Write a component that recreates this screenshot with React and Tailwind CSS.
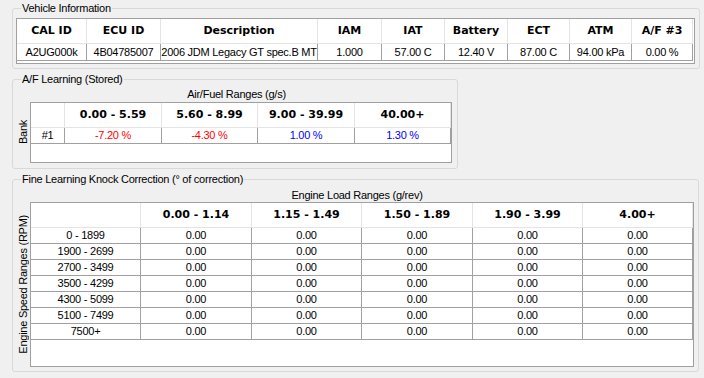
import React from "react";

const vehicleInfo = [
  { label: "CAL ID", value: "A2UG000k", w: "w-[70px]" },
  { label: "ECU ID", value: "4B04785007", w: "w-[74px]" },
  { label: "Description", value: "2006 JDM Legacy GT spec.B MT", w: "w-[157px]" },
  { label: "IAM", value: "1.000", w: "w-[64px]" },
  { label: "IAT", value: "57.00 C", w: "w-[63px]" },
  { label: "Battery", value: "12.40 V", w: "w-[63px]" },
  { label: "ECT", value: "87.00 C", w: "w-[62px]" },
  { label: "ATM", value: "94.00 kPa", w: "w-[62px]" },
  { label: "A/F #3", value: "0.00 %", w: "w-[61px]" },
];

const afRanges = [
  { label: "0.00 - 5.59", value: "-7.20 %", color: "text-[#ff0000]", w: "w-[97px]" },
  { label: "5.60 - 8.99", value: "-4.30 %", color: "text-[#ff0000]", w: "w-[96px]" },
  { label: "9.00 - 39.99", value: "1.00 %", color: "text-[#0000ff]", w: "w-[97px]" },
  { label: "40.00+", value: "1.30 %", color: "text-[#0000ff]", w: "w-[96px]" },
];

const loadRanges = [
  { label: "0.00 - 1.14", w: "w-[111px]" },
  { label: "1.15 - 1.49", w: "w-[110px]" },
  { label: "1.50 - 1.89", w: "w-[111px]" },
  { label: "1.90 - 3.99", w: "w-[110px]" },
  { label: "4.00+", w: "w-[110px]" },
];

const rpmRanges = [
  "0 - 1899",
  "1900 - 2699",
  "2700 - 3499",
  "3500 - 4299",
  "4300 - 5099",
  "5100 - 7499",
  "7500+",
];

const headCell =
  "flex items-center justify-center whitespace-nowrap bg-white border-r border-b border-[#e4e4e4] font-['DejaVu_Sans',Verdana,sans-serif] font-bold text-[11px] tracking-normal";
const dataCell =
  "flex items-center justify-center whitespace-nowrap overflow-hidden bg-white border-r border-b border-[#a0a0a0]";

const GroupLegend = ({ children }) => (
  <legend className="ml-[5px] px-[1px] leading-[13px]">{children}</legend>
);

const SideLabel = ({ children }) => (
  <div className="w-[14px] flex items-center justify-center">
    <span className="[writing-mode:vertical-rl] rotate-180 leading-[13px] whitespace-nowrap">
      {children}
    </span>
  </div>
);

export default function App() {
  return (
    <div className="w-[704px] h-[378px] bg-[#f0f0f0] pt-[2px] text-[11px] tracking-[-0.25px] text-black font-['Liberation_Sans',Arial,sans-serif] overflow-hidden">
      {/* Vehicle Information */}
      <fieldset className="ml-[12px] w-[688px] h-[67px] border border-[#d9d9d9] rounded-[3px] px-[3px]">
        <GroupLegend>Vehicle Information</GroupLegend>
        <div className="mt-[3px] w-[679px] h-[46px] border border-[#a0a0a0] bg-white">
          <div className="flex h-[25px]">
            {vehicleInfo.map((c) => (
              <div key={c.label} className={`${headCell} ${c.w}`}>
                {c.label}
              </div>
            ))}
          </div>
          <div className="flex h-[17px]">
            {vehicleInfo.map((c) => (
              <div key={c.label} className={`${dataCell} ${c.w}`}>
                {c.value}
              </div>
            ))}
          </div>
        </div>
      </fieldset>

      {/* A/F Learning */}
      <fieldset className="mt-[4px] ml-[12px] w-[446px] h-[96px] border border-[#d9d9d9] rounded-[3px] pl-[3px]">
        <GroupLegend>A/F Learning (Stored)</GroupLegend>
        <div className="mt-[2px] leading-[13px] text-center">Air/Fuel Ranges (g/s)</div>
        <div className="mt-[1px] flex">
          <SideLabel>Bank</SideLabel>
          <div className="w-[422px] h-[61px] border border-[#a0a0a0] bg-white">
            <div className="flex h-[25px]">
              <div className={`${headCell} w-[34px]`}></div>
              {afRanges.map((c) => (
                <div key={c.label} className={`${headCell} ${c.w}`}>
                  {c.label}
                </div>
              ))}
            </div>
            <div className="flex h-[16px]">
              <div className={`${dataCell} w-[34px]`}>#1</div>
              {afRanges.map((c) => (
                <div key={c.label} className={`${dataCell} ${c.w} ${c.color}`}>
                  {c.value}
                </div>
              ))}
            </div>
          </div>
        </div>
      </fieldset>

      {/* Fine Learning Knock Correction */}
      <fieldset className="mt-[4px] ml-[12px] w-[687px] h-[199px] border border-[#d9d9d9] rounded-[3px] pl-[3px]">
        <GroupLegend>Fine Learning Knock Correction (° of correction)</GroupLegend>
        <div className="mt-[3px] leading-[13px] text-center">Engine Load Ranges (g/rev)</div>
        <div className="flex">
          <SideLabel>Engine Speed Ranges (RPM)</SideLabel>
          <div className="w-[664px] h-[165px] border border-[#a0a0a0] bg-white">
            <div className="flex h-[25px]">
              <div className={`${headCell} w-[110px]`}></div>
              {loadRanges.map((c) => (
                <div key={c.label} className={`${headCell} ${c.w}`}>
                  {c.label}
                </div>
              ))}
            </div>
            {rpmRanges.map((r) => (
              <div key={r} className="flex h-[16px]">
                <div className={`${dataCell} w-[110px]`}>{r}</div>
                {loadRanges.map((c) => (
                  <div key={c.label} className={`${dataCell} ${c.w}`}>
                    0.00
                  </div>
                ))}
              </div>
            ))}
          </div>
        </div>
      </fieldset>
    </div>
  );
}
